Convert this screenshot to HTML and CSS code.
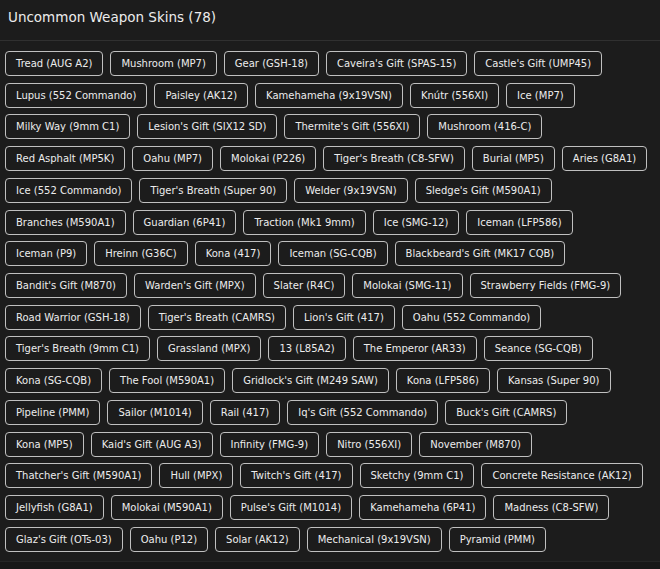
FILE: index.html
```html
<!DOCTYPE html>
<html lang="en">

<head>
    <meta charset="UTF-8">
    <meta name="viewport" content="width=device-width, initial-scale=1.0">
    <title>Uncommon Weapon Skins</title>
    <link rel="stylesheet" href="styles.css">
</head>

<body>
    <div class="panel">
        <h2 class="panel-title">Uncommon Weapon Skins (78)</h2>
        <div class="skin-list">
            <span class="skin">Tread (AUG A2)</span>
            <span class="skin">Mushroom (MP7)</span>
            <span class="skin">Gear (GSH-18)</span>
            <span class="skin">Caveira's Gift (SPAS-15)</span>
            <span class="skin">Castle's Gift (UMP45)</span>
            <span class="skin">Lupus (552 Commando)</span>
            <span class="skin">Paisley (AK12)</span>
            <span class="skin">Kamehameha (9x19VSN)</span>
            <span class="skin">Knútr (556XI)</span>
            <span class="skin">Ice (MP7)</span>
            <span class="skin">Milky Way (9mm C1)</span>
            <span class="skin">Lesion's Gift (SIX12 SD)</span>
            <span class="skin">Thermite's Gift (556XI)</span>
            <span class="skin">Mushroom (416-C)</span>
            <span class="skin">Red Asphalt (MP5K)</span>
            <span class="skin">Oahu (MP7)</span>
            <span class="skin">Molokai (P226)</span>
            <span class="skin">Tiger's Breath (C8-SFW)</span>
            <span class="skin">Burial (MP5)</span>
            <span class="skin">Aries (G8A1)</span>
            <span class="skin">Ice (552 Commando)</span>
            <span class="skin">Tiger's Breath (Super 90)</span>
            <span class="skin">Welder (9x19VSN)</span>
            <span class="skin">Sledge's Gift (M590A1)</span>
            <span class="skin">Branches (M590A1)</span>
            <span class="skin">Guardian (6P41)</span>
            <span class="skin">Traction (Mk1 9mm)</span>
            <span class="skin">Ice (SMG-12)</span>
            <span class="skin">Iceman (LFP586)</span>
            <span class="skin">Iceman (P9)</span>
            <span class="skin">Hreinn (G36C)</span>
            <span class="skin">Kona (417)</span>
            <span class="skin">Iceman (SG-CQB)</span>
            <span class="skin">Blackbeard's Gift (MK17 CQB)</span>
            <span class="skin">Bandit's Gift (M870)</span>
            <span class="skin">Warden's Gift (MPX)</span>
            <span class="skin">Slater (R4C)</span>
            <span class="skin">Molokai (SMG-11)</span>
            <span class="skin">Strawberry Fields (FMG-9)</span>
            <span class="skin">Road Warrior (GSH-18)</span>
            <span class="skin">Tiger's Breath (CAMRS)</span>
            <span class="skin">Lion's Gift (417)</span>
            <span class="skin">Oahu (552 Commando)</span>
            <span class="skin">Tiger's Breath (9mm C1)</span>
            <span class="skin">Grassland (MPX)</span>
            <span class="skin">13 (L85A2)</span>
            <span class="skin">The Emperor (AR33)</span>
            <span class="skin">Seance (SG-CQB)</span>
            <span class="skin">Kona (SG-CQB)</span>
            <span class="skin">The Fool (M590A1)</span>
            <span class="skin">Gridlock's Gift (M249 SAW)</span>
            <span class="skin">Kona (LFP586)</span>
            <span class="skin">Kansas (Super 90)</span>
            <span class="skin">Pipeline (PMM)</span>
            <span class="skin">Sailor (M1014)</span>
            <span class="skin">Rail (417)</span>
            <span class="skin">Iq's Gift (552 Commando)</span>
            <span class="skin">Buck's Gift (CAMRS)</span>
            <span class="skin">Kona (MP5)</span>
            <span class="skin">Kaid's Gift (AUG A3)</span>
            <span class="skin">Infinity (FMG-9)</span>
            <span class="skin">Nitro (556XI)</span>
            <span class="skin">November (M870)</span>
            <span class="skin">Thatcher's Gift (M590A1)</span>
            <span class="skin">Hull (MPX)</span>
            <span class="skin">Twitch's Gift (417)</span>
            <span class="skin">Sketchy (9mm C1)</span>
            <span class="skin">Concrete Resistance (AK12)</span>
            <span class="skin">Jellyfish (G8A1)</span>
            <span class="skin">Molokai (M590A1)</span>
            <span class="skin">Pulse's Gift (M1014)</span>
            <span class="skin">Kamehameha (6P41)</span>
            <span class="skin">Madness (C8-SFW)</span>
            <span class="skin">Glaz's Gift (OTs-03)</span>
            <span class="skin">Oahu (P12)</span>
            <span class="skin">Solar (AK12)</span>
            <span class="skin">Mechanical (9x19VSN)</span>
            <span class="skin">Pyramid (PMM)</span>
        </div>
    </div>
    <div class="panel-foot"></div>
</body>

</html>
```

FILE: styles.css
```css
body {
    margin: 0;
    padding: 0;
    background-color: #1c1c1c;
    font-family: "DejaVu Sans", "Liberation Sans", sans-serif;
    color: #ececec;
}

.panel-title {
    margin: 0;
    height: 40px;
    padding: 0 8px;
    font-size: 13.5px;
    font-weight: normal;
    line-height: 34px;
    border-bottom: 1px solid #303030;
}

.skin-list {
    display: flex;
    flex-wrap: wrap;
    gap: 6.73px 7px;
    padding: 10px 10px 9px 5px;
}

.skin {
    height: 25px;
    box-sizing: border-box;
    padding: 0 10px;
    border: 1px solid #c0c0c0;
    border-radius: 4px;
    font-size: 10px;
    line-height: 23px;
    white-space: nowrap;
}

.panel-foot {
    height: 8px;
    border-top: 1px solid #252525;
    background-color: #171717;
}
```
